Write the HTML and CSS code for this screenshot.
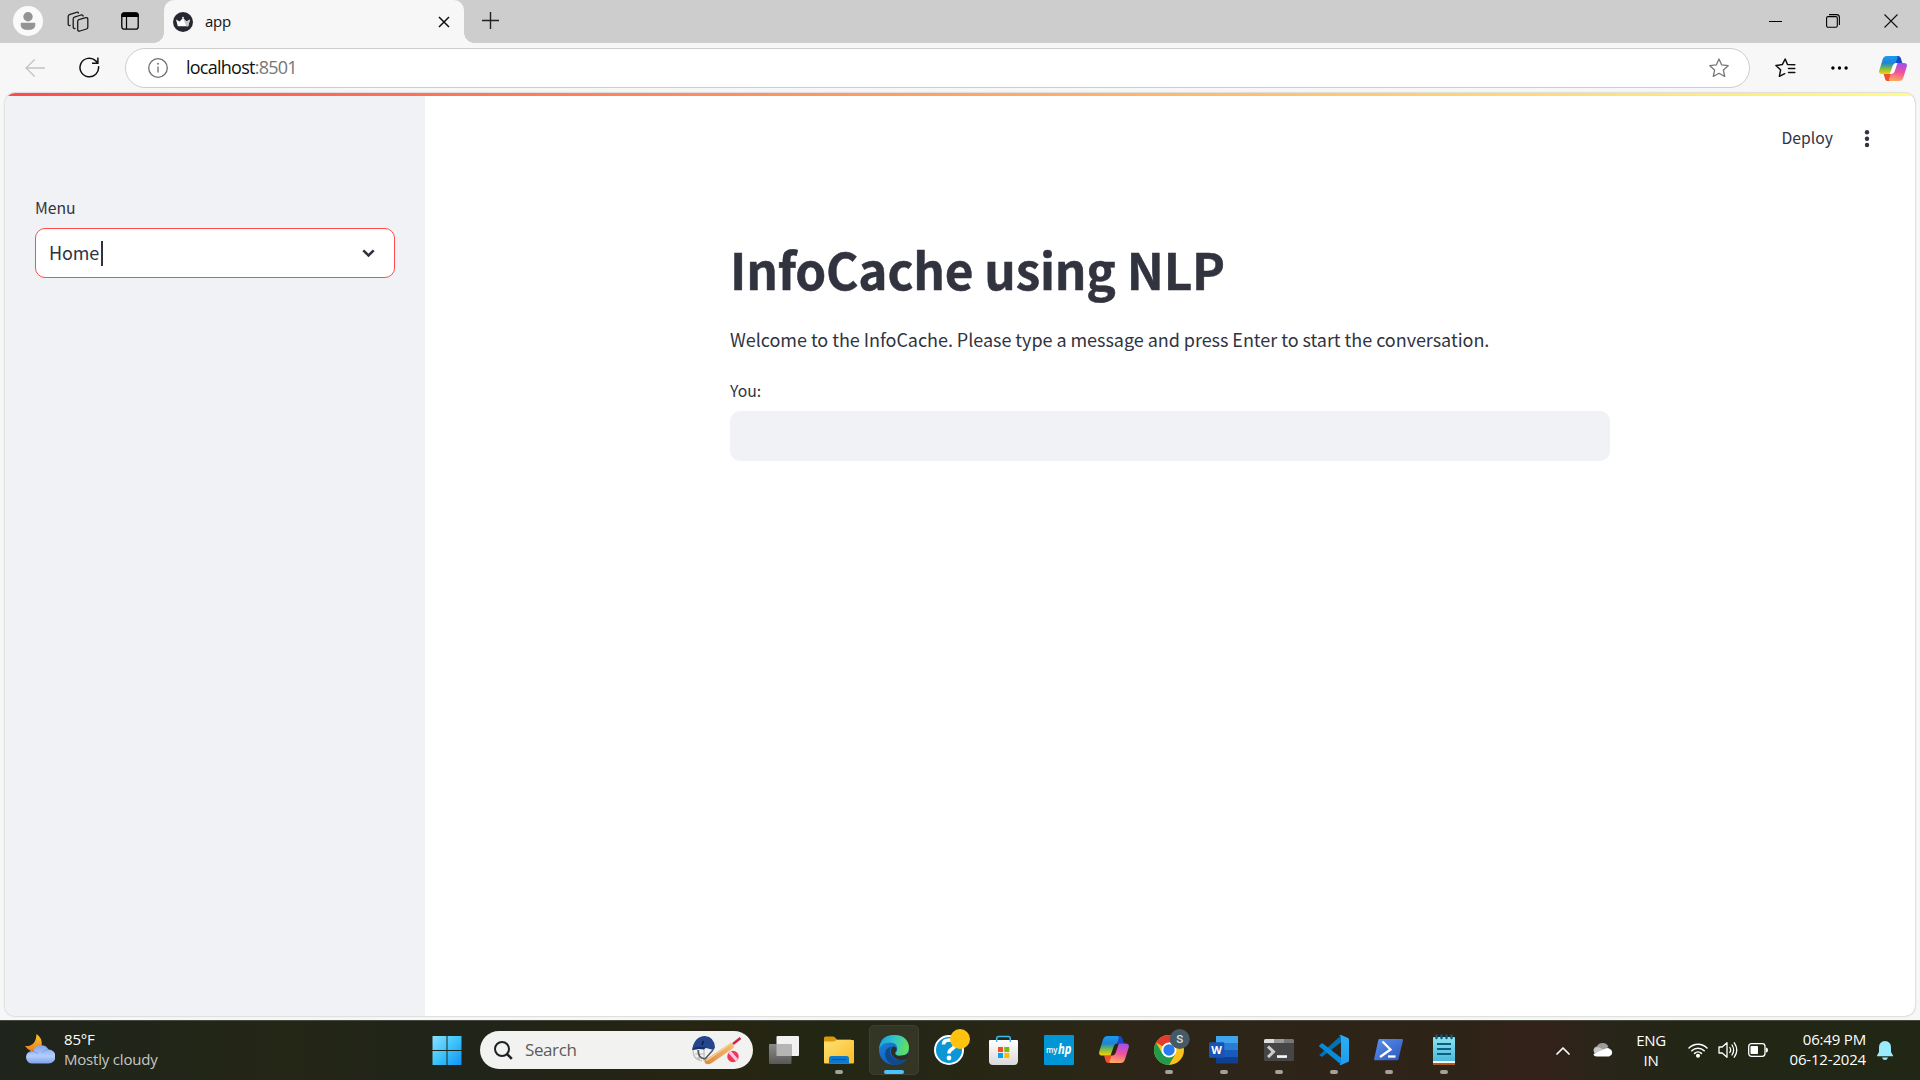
FILE: index.html
```html
<!DOCTYPE html>
<html lang="en">
<head>
<meta charset="utf-8">
<title>app</title>
<link rel="stylesheet" href="styles.css">
</head>
<body>
<svg class="defs" width="0" height="0" aria-hidden="true">
  <defs>
    <linearGradient id="cpA" x1="0" y1="0" x2="0" y2="1"><stop offset="0" stop-color="#1b9af0"/><stop offset=".4" stop-color="#1f83d6"/><stop offset=".65" stop-color="#6bb852"/><stop offset="1" stop-color="#ffd000"/></linearGradient>
    <linearGradient id="cpB" x1=".6" y1="0" x2=".4" y2="1"><stop offset="0" stop-color="#a24df0"/><stop offset=".5" stop-color="#f0529a"/><stop offset="1" stop-color="#ffa95c"/></linearGradient>
    <linearGradient id="win" gradientUnits="userSpaceOnUse" x1="10" y1="11" x2="40" y2="40"><stop offset="0" stop-color="#8be0ff"/><stop offset=".5" stop-color="#3cc3fb"/><stop offset="1" stop-color="#0f92f5"/></linearGradient>
    <linearGradient id="fold" x1="0" y1="0" x2="1" y2="1"><stop offset="0" stop-color="#ffdf75"/><stop offset="1" stop-color="#fabd25"/></linearGradient>
    <linearGradient id="edA" x1="0" y1=".3" x2="1" y2=".5"><stop offset="0" stop-color="#1b9de2"/><stop offset=".5" stop-color="#32c8c8"/><stop offset="1" stop-color="#65e055"/></linearGradient>
    <linearGradient id="edB" x1="0" y1="0" x2=".6" y2="1"><stop offset="0" stop-color="#1b8ad8"/><stop offset="1" stop-color="#1259b8"/></linearGradient>
    <linearGradient id="bag" x1="0" y1="0" x2="0" y2="1"><stop offset="0" stop-color="#fff"/><stop offset="1" stop-color="#d9d9d9"/></linearGradient>
    <linearGradient id="vs" x1="0" y1="0" x2="0" y2="1"><stop offset="0" stop-color="#2baef3"/><stop offset="1" stop-color="#1f9cec"/></linearGradient>
    <linearGradient id="ps" x1="0" y1="0" x2="1" y2="1"><stop offset="0" stop-color="#5a92f0"/><stop offset="1" stop-color="#2b55b8"/></linearGradient>
    <linearGradient id="note" x1="0" y1="0" x2="0" y2="1"><stop offset="0" stop-color="#8be4ee"/><stop offset="1" stop-color="#4cb9dd"/></linearGradient>
    <linearGradient id="moon" x1="0" y1="0" x2="0" y2="1"><stop offset="0" stop-color="#f9c832"/><stop offset="1" stop-color="#ee7d1a"/></linearGradient>
    <linearGradient id="cloud" x1="0" y1="0" x2="0" y2="1"><stop offset="0" stop-color="#7ea5ee"/><stop offset=".6" stop-color="#b4cdfa"/><stop offset="1" stop-color="#7ba0ee"/></linearGradient>
    <linearGradient id="bat" x1="1" y1="0" x2="0" y2="1"><stop offset="0" stop-color="#f7c27c"/><stop offset="1" stop-color="#d98a3c"/></linearGradient>
    <linearGradient id="tvF" x1="0" y1="0" x2="0" y2="1"><stop offset="0" stop-color="#8b8b8a"/><stop offset="1" stop-color="#585857"/></linearGradient>
    <symbol id="copilot" viewBox="0 0 30 27">
      <path d="M17 0h3.500q2 0 2.700 2l1.800 5.500h-5.500q-2 0-2.700 2z" fill="#1748c8"/>
      <path d="M12.500 27H9.300q-2 0-2.700-2L5 19.500h5.400q2.200 0 3-2.500z" fill="#f0512d"/>
      <path d="M8.500 0h9.700q2.200 0 1.500 2.300L15 16.500q-1 3-4.200 3H3.500Q-.7 19.500.3 15.500L4 3.500Q5.200 0 8.500 0z" fill="url(#cpA)"/>
      <path d="M21.500 27h-9.200q-2.300 0-1.500-2.400L15.500 10.500q1-3 4.200-3h6.800q4.200 0 3.200 4L26 23.500q-1.200 3.500-4.500 3.500z" fill="url(#cpB)"/>
      <path d="M14.800 10.200q.8-2.700 3.200-2.700h1.800l-3 9q-1 3-3.500 3h-1.800z" fill="var(--gap, #fff)"/>
    </symbol>
  </defs>
</svg>

<header class="tabstrip">
  <svg class="ic avatar" width="30" height="30" viewBox="0 0 30 30"><circle cx="15" cy="15" r="15" fill="#fafafa"/><circle cx="15" cy="10.700" r="4.700" fill="#949494"/><path d="M8 17h14v2.200q0 4.500-7 4.500t-7-4.500z" fill="#949494" stroke="#949494" stroke-width=".5" stroke-linejoin="round"/></svg>
  <svg class="ic spaces" width="22" height="22" viewBox="0 0 22 22" fill="none" stroke="#1c1c1c" stroke-width="1.300" stroke-linejoin="round" stroke-linecap="round"><path d="M11.800 8.600l7-1.900q2-.4 2 1.500v8q0 1.400-1.300 1.800l-6.600 2q-2.200.5-2.200-1.500v-8q0-1.500 1.100-1.900z"/><path d="M8 17.500q-1.800.4-1.800-1.500V8q0-1.500 1.200-1.900L14 4q1.800-.4 2.100 1"/><path d="M3 14.500q-1.800.3-1.800-1.500V5.500Q1.200 4 2.400 3.600L9.500 1.300q1.500-.4 2 .8"/></svg>
  <svg class="ic panes" width="18" height="18" viewBox="0 0 18 18"><rect x=".8" y=".8" width="16.400" height="16.400" rx="2.500" fill="none" stroke="#000" stroke-width="1.300"/><path d="M.5 5V2.500Q.5.500 2.500.5h13q2 0 2 2V5z"/><path d="M5.500 5v12" stroke="#000" stroke-width="1.200"/></svg>
  <div class="tab">
    <svg class="ic" width="20" height="20" viewBox="0 0 20 20"><circle cx="10" cy="10" r="10" fill="#262730"/><path d="M3 7.500l3.500 2L10 6l3.500 3.500 3.500-2-1.800 6.800H4.800z" fill="#fff"/><path d="M10 6l3.500 3.500 3.500-2-1.800 6.800h-2z" fill="#c9c9cc"/><circle cx="10" cy="5.700" r="1" fill="#ddd"/></svg>
    <span class="tab-title">app</span>
    <svg class="ic" width="12" height="12" viewBox="0 0 12 12"><path d="M1 1l10 10M11 1L1 11" stroke="#111" stroke-width="1.500"/></svg>
  </div>
  <svg class="ic plus" width="17" height="17" viewBox="0 0 17 17"><path d="M8.500 0v17M0 8.500h17" stroke="#222" stroke-width="1.400"/></svg>
  <div class="winbtns">
    <svg width="13" height="14" viewBox="0 0 13 14"><path d="M0 7.500h13" stroke="#000"/></svg>
    <svg width="14" height="14" viewBox="0 0 14 14" fill="none" stroke="#000" stroke-width="1.100"><rect x=".6" y="2.600" width="10.700" height="10.700" rx="1.500"/><path d="M3 .6h7.500q2.900 0 2.900 2.900V11"/></svg>
    <svg width="14" height="14" viewBox="0 0 14 14"><path d="M.5.500l13 13M13.500.5l-13 13" stroke="#111" stroke-width="1.100"/></svg>
  </div>
</header>

<nav class="toolbar">
  <svg class="ic back" width="20" height="18" viewBox="0 0 20 18" fill="none" stroke="#c4c4c4" stroke-width="1.300"><path d="M20 9H1M9.700.5L1 9l8.700 8.500"/></svg>
  <svg class="ic reload" width="21" height="21" viewBox="0 0 21 21" fill="none" stroke="#111" stroke-width="1.500"><path d="M19.500 9.200a9.300 9.300 0 1 1-2.700-5.300L18.800 6M18.900 0.500V6.300H13"/></svg>
  <div class="address">
    <svg class="ic" width="20" height="20" viewBox="0 0 20 20"><circle cx="10" cy="10" r="9.300" fill="none" stroke="#707070" stroke-width="1.300"/><path d="M10 8.500v6" stroke="#707070" stroke-width="1.300"/><circle cx="10" cy="5.800" r=".95" fill="#707070"/></svg>
    <span class="url">localhost<span class="port">:8501</span></span>
    <svg class="ic" width="20" height="20" viewBox="0 0 20 20" fill="none" stroke="#777" stroke-width="1.300" stroke-linejoin="round"><path d="M10 1l2.700 5.900 6.500.8-4.800 4.400 1.300 6.400L10 15.300l-5.700 3.200 1.300-6.400L.8 7.700l6.500-.8z"/></svg>
  </div>
  <svg class="ic favs" width="21" height="20" viewBox="0 0 21 20" fill="none" stroke="#111" stroke-width="1.500" stroke-linejoin="round" stroke-linecap="round"><path d="M12.500 6.500L10.200 1 7.300 6.600.9 7.500l4.700 4.300-1.200 6.500 5.300-2.600M12.500 6.500l7.300.3M13.500 10.500h6.300M13.500 14.500h6.300"/></svg>
  <svg class="ic more" width="17" height="4" viewBox="0 0 17 4"><circle cx="1.900" cy="2" r="1.700"/><circle cx="8.500" cy="2" r="1.700"/><circle cx="15.100" cy="2" r="1.700"/></svg>
  <svg class="ic cop" width="28" height="27"><use href="#copilot"/></svg>
</nav>

<div class="viewport">
  <div class="page">
    <div class="decoration"></div>
    <div class="columns">
      <aside class="sidebar">
        <label class="label">Menu</label>
        <div class="select"><span class="value">Home</span><i class="caret"></i>
          <svg class="ic" width="13" height="9" viewBox="0 0 13 9"><path d="M1.300 1.300l5.200 5.200 5.200-5.200" fill="none" stroke="#31333f" stroke-width="2.500"/></svg>
        </div>
      </aside>
      <main class="main">
        <div class="actions"><span class="deploy">Deploy</span>
          <svg class="ic" width="6" height="18" viewBox="0 0 6 18" fill="#31333f"><circle cx="3" cy="2.300" r="2.200"/><circle cx="3" cy="8.700" r="2.200"/><circle cx="3" cy="15" r="2.200"/></svg>
        </div>
        <div class="block">
          <h1>InfoCache using NLP</h1>
          <p>Welcome to the InfoCache. Please type a message and press Enter to start the conversation.</p>
          <label class="label you">You:</label>
          <div class="input"></div>
        </div>
      </main>
    </div>
  </div>
</div>

<footer class="taskbar">
  <div class="weather">
    <svg class="ic" width="30" height="30" viewBox="0 0 30 30"><path d="M11.500 0q6 4 5.200 11Q13 17 6 17 2 15 0 12q11 1 11.500-12z" fill="url(#moon)"/><path d="M6.500 29.500a6.300 6.300 0 0 1 0-12.500q1.500 0 1.800.3A8.300 8.300 0 0 1 23.500 15.500a7 7 0 0 1 0 14z" fill="url(#cloud)"/><path d="M4 18.500q5-2.500 9 1M17 19q2-3.500 6.500-3.500" stroke="#6f98e8" stroke-width=".8" fill="none"/></svg>
    <div class="two"><span>85°F</span><span class="dim">Mostly cloudy</span></div>
  </div>
  <svg class="tile start" viewBox="0 0 50 50"><path d="M10.500 11h14v14h-14zM25.500 11h14v14h-14zM10.500 26h14v14h-14zM25.500 26h14v14h-14z" fill="url(#win)"/></svg>
  <div class="search">
    <svg class="ic" width="19" height="19" viewBox="0 0 19 19" fill="none" stroke="#1e2124" stroke-width="2"><circle cx="8" cy="8" r="7"/><path d="M12.800 12.800l5 5" stroke-width="2.600"/></svg>
    <span class="search-text">Search</span>
    <svg class="ic" width="50" height="30" viewBox="0 0 50 30">
      <path d="M2 15q0 10 9 11M4 19h10M5 23h12M8 15v10M13 14v12" fill="none" stroke="#bbb" stroke-width="1.200"/>
      <path d="M7 15q0 8 7 9l8-9" fill="none" stroke="#555" stroke-width="1.500"/>
      <path d="M1 15Q3.500 1 14 1q9.500 1 10 11.500l-1.500 2.500L15 13z" fill="#27458c"/><path d="M1 15Q4 10 15 12.500l-2 2Q6 13.500 1 15z" fill="#16316f"/><path d="M12.500 6l-1.500 4" stroke="#101d42" stroke-width="1.500"/>
      <path d="M42 9l7.500-6" stroke="#cf2547" stroke-width="2.600"/>
      <path d="M13.500 25.500L40 7.500l3 2.500-.5 3L20 28.500q-4 1.500-5.500 0-1.500-1.500-1-3z" fill="url(#bat)"/><path d="M15.500 25.500L40 8.500" stroke="#fbd29b" stroke-width="1.300"/>
      <circle cx="42" cy="21.500" r="5.700" fill="#ed3852"/><path d="M37.500 18l7.500 8.500 2-2.500-7-8z" fill="#f5c8ea"/>
    </svg>
  </div>
  <div class="apps">
    <svg class="tile" viewBox="0 0 50 50"><rect x="17.500" y="11" width="22.500" height="20" rx="1" fill="#f1f1f1"/><rect x="10" y="19" width="22.500" height="20" rx="1" fill="url(#tvF)"/><path d="M17.500 19h15v12h-15z" fill="#b5b5b5"/></svg>
    <svg class="tile" viewBox="0 0 50 50"><path d="M10 13q0-1.500 1.500-1.500H19q1 0 2 1l2 2h14v6H10z" fill="#dc9a0b"/><path d="M10 16.500h10l2.500-1.500H39q1 0 1 1v21.500q0 1-1 1H11q-1 0-1-1z" fill="url(#fold)"/><path d="M15 38.500v-5q0-2.500 2.500-2.500h15q2.500 0 2.500 2.500v5z" fill="#0d79cf"/><path d="M18 34.500h14" stroke="#0a559c" stroke-width="1.200"/><rect class="dot" x="21" y="45" width="8" height="4" rx="2"/></svg>
    <svg class="tile active" viewBox="0 0 50 50"><circle cx="25" cy="25" r="15" fill="url(#edB)"/><path d="M10.200 24Q11 10 25 10q14 0 15 12.500 0 8-8.500 8-5.500 0-5-2.800 1.800-1.500 1.800-4Q28 17.500 21 17.500q-8 0-10.800 6.500z" fill="url(#edA)"/><path d="M23 21.500q-3 3-1.500 7.500 2.500 6 9.500 6 4.500 0 7.300-1.800.4 1.200-3.300 4-5 4-11 2.200-8-3-8-10.500 0-5.900 7-7.400z" fill="#114a8b"/><path d="M24 21.500q4 0 3.500 3.500-.5 1.800-1.500 2.500-.5 4.500 8 3 4.500-1 5.500-3.500 0 4-1.500 6.500-5 3-10.500.5-6.500-3.500-5.500-9 .5-2.500 2-3.500z" fill="#2c3024"/><rect x="15" y="45" width="20" height="4" rx="2" fill="#4cc2ff"/></svg>
    <svg class="tile" viewBox="0 0 50 50"><circle cx="25" cy="25" r="14" fill="#0b96d6" stroke="#fff" stroke-width="2"/><path d="M19.500 19.500q0-4.500 5.500-4.500 5.800 0 5.800 4.500 0 3-3.300 4.800-2.500 1.500-2.500 4.200" fill="none" stroke="#fff" stroke-width="3.600"/><circle cx="25" cy="33" r="2.400" fill="#fff"/><circle cx="36" cy="14" r="10" fill="#ffc20e"/></svg>
    <svg class="tile" viewBox="0 0 50 50"><path d="M10 16q0-1 1-1h27q1 0 1 1v20q0 4-4 4H14q-4 0-4-4z" fill="url(#bag)"/><path d="M17.700 17v-3.500q0-2 2-2h9.600q2 0 2 2V17" fill="none" stroke="#35bdf0" stroke-width="1.500"/><path d="M19 22h5v5h-5z" fill="#f25022"/><path d="M25.300 22h5v5h-5z" fill="#7fba00"/><path d="M19 28h5v5h-5z" fill="#00a4ef"/><path d="M25.300 28h5v5h-5z" fill="#ffb900"/></svg>
    <svg class="tile" viewBox="0 0 50 50"><rect x="10" y="10" width="30" height="30" rx="1" fill="#0096d6"/><text class="hp" x="12" y="28" textLength="11.500" lengthAdjust="spacingAndGlyphs" font-size="8.500">my</text><text class="hp it" x="24" y="29" textLength="13.500" lengthAdjust="spacingAndGlyphs" font-size="14">hp</text></svg>
    <svg class="tile dark" viewBox="0 0 50 50"><use href="#copilot" x="10" y="11" width="30" height="27"/></svg>
    <svg class="tile" viewBox="0 0 50 50"><circle cx="25" cy="25" r="15" fill="#fbc116"/><path d="M25 25L12 17.500A15 15 0 0 1 38 17.500H25z" fill="#e33b2e"/><path d="M12 17.500A15 15 0 0 0 25 40l6.500-11.200L25 25 18.500 28.700z" fill="#229a4b"/><circle cx="25" cy="25" r="7.500" fill="#fff"/><circle cx="25" cy="25" r="5.700" fill="#2a7bee"/><circle cx="35.700" cy="14" r="10" fill="#455a64"/><text class="badge" x="35.700" y="18" font-size="11.500">S</text><rect class="dot" x="21" y="45" width="8" height="4" rx="2"/></svg>
    <svg class="tile" viewBox="0 0 50 50"><path d="M17 11h22v7H17z" fill="#41a5ee"/><path d="M17 18h22v7H17z" fill="#2b7cd3"/><path d="M17 25h22v7H17z" fill="#185abd"/><path d="M17 32h22v6.500H17z" fill="#103f91"/><rect x="10" y="17.300" width="15.300" height="15.400" rx="1.300" fill="#1853b5"/><text class="word" x="17.600" y="28.800" font-size="11">W</text><rect class="dot" x="21" y="45" width="8" height="4" rx="2"/></svg>
    <svg class="tile" viewBox="0 0 50 50"><rect x="10" y="14" width="30" height="22" rx="1.500" fill="#464646"/><path d="M10 18v-2.500q0-1.500 1.500-1.500H20v4z" fill="#ddd"/><path d="M20 14h10v4H20z" fill="#9b9b9b"/><path d="M30 14h8.500q1.500 0 1.500 1.500V18H30z" fill="#777"/><path d="M14 21.500l5.500 5.300-5.500 5.300" fill="none" stroke="#ccc" stroke-width="3"/><path d="M23 30.200h10v2.700H23z" fill="#f5f5f5"/><rect class="dot" x="21" y="45" width="8" height="4" rx="2"/></svg>
    <svg class="tile" viewBox="0 0 50 50"><path d="M10 29.500l2 2q.8.500 1.500 0L32.500 17v-7l-21 19q-.8.500-1.500.5z" fill="#0072b9"/><path d="M10.300 20.500l2-2q.8-.5 1.500 0L32.500 33v7L10.300 21.500q-.5-.5 0-1z" fill="#0a8bd8"/><path d="M32 10l7 3q1 .5 1 1.500v21q0 1-1 1.500l-7 3q-1 .2-2-1 2 1 2-1.500v-25q0-2.500-2-1.500 1-1.200 2-1z" fill="url(#vs)"/><rect class="dot" x="21" y="45" width="8" height="4" rx="2"/></svg>
    <svg class="tile" viewBox="0 0 50 50"><path d="M15.500 14H38q1.300 0 1 1.300L34.500 34q-.3 1.300-1.500 1.300H11q-1.200 0-.9-1.300l4.200-18.700q.3-1.300 1.200-1.300z" fill="url(#ps)"/><path d="M18.500 16.500l8 8-10.500 7.500" fill="none" stroke="#fff" stroke-width="2.300"/><path d="M24 31.500h7.500" stroke="#fff" stroke-width="2.300"/><rect class="dot" x="21" y="45" width="8" height="4" rx="2"/></svg>
    <svg class="tile" viewBox="0 0 50 50"><path d="M14 36h22v4H14z" fill="#b2581c"/><path d="M14 34h22v4H14z" fill="#f3f3f3"/><path d="M14 13q0-1 1-1h20q1 0 1 1v23H14z" fill="url(#note)"/><path d="M18 19h14M18 24h14M18 29h14" stroke="#0c5f82" stroke-width="1.800"/><path d="M17.500 10.500v2.500M22.500 10.500v2.500M27.500 10.500v2.500M32.500 10.500v2.500" stroke="#0e5a78" stroke-width="2.400" stroke-linecap="round"/><rect class="dot" x="21" y="45" width="8" height="4" rx="2"/></svg>
  </div>
  <div class="tray">
    <svg class="ic up" width="14" height="9" viewBox="0 0 14 9"><path d="M1 8l6-6 6 6" fill="none" stroke="#fff" stroke-width="1.700" stroke-linecap="round" stroke-linejoin="round"/></svg>
    <svg class="ic onedrive" width="20" height="14" viewBox="0 0 20 14"><path d="M3.500 11a4 4 0 0 1 .5-7.800A6.500 6.500 0 0 1 15.500 4z" fill="#9c9c9b"/><path d="M2 4.800q3-1.500 6 .5l8 5H2a4 4 0 0 1 0-5.500z" fill="#c9c9c8"/><path d="M3.800 13.500q-3 0-3.300-2.500L12 5.700q2.500-1.500 5 .3a4 4 0 0 1-1 7.500z" fill="#fff"/></svg>
    <div class="two lang"><span>ENG</span><span>IN</span></div>
    <svg class="ic wifi" width="20" height="16" viewBox="0 0 20 16" fill="none" stroke="#fff" stroke-width="1.500" stroke-linecap="round"><path d="M1 6a12.700 12.700 0 0 1 18 0M3.800 8.800a8.800 8.800 0 0 1 12.400 0M6.600 11.400a4.900 4.900 0 0 1 6.800 0"/><circle cx="10" cy="13.800" r="1.300" fill="#fff"/></svg>
    <svg class="ic vol" width="20" height="18" viewBox="0 0 20 18" fill="none" stroke="#fff" stroke-width="1.300" stroke-linecap="round" stroke-linejoin="round"><path d="M1 6h3.200l4.800-4.300v14.600L4.200 12H1z"/><path d="M11.800 6.500q1.700 2.500 0 5M14 4q3.300 5 0 10M16.300 1.800q5 7.200 0 14.400"/></svg>
    <svg class="ic batt" width="20" height="14" viewBox="0 0 20 14"><rect x=".7" y=".7" width="16.300" height="12.600" rx="2.700" fill="none" stroke="#fff" stroke-width="1.300"/><rect x="2.500" y="3" width="7.500" height="8" rx=".7" fill="#fff"/><path d="M18 4.500q2 0 2 2.500t-2 2.500z" fill="#fff"/></svg>
    <div class="two clock"><span>06:49 PM</span><span>06-12-2024</span></div>
    <svg class="ic bell" width="16" height="19" viewBox="0 0 16 19" fill="#99ebff"><path d="M8 0q6 .5 6 6.500V11l2 3.500v.8H0v-.8L2 11V6.500Q2 .5 8 0zM5 16.500h6q-.8 2.500-3 2.500t-3-2.500z"/></svg>
  </div>
</footer>
</body>
</html>
```
FILE: styles.css
```css
* { box-sizing: border-box; }
body {
  margin: 0; width: 1920px; height: 1080px; overflow: hidden;
  display: flex; flex-direction: column;
  background: #f7f7f7;
  font-family: "Open Sans", "Noto Sans", sans-serif;
}
.defs { position: absolute; }
.ic { flex: none; display: block; }
span { white-space: nowrap; }

/* Tab strip */
.tabstrip { height: 43px; flex: none; display: flex; align-items: flex-start; background: #cdcdcd; }
.avatar { margin: 6px 0 0 13px; }
.spaces { margin: 10.500px 0 0 24px; }
.panes { margin: 12px 0 0 32px; }
.tab {
  position: relative; width: 300px; height: 43px; margin-left: 25px; padding: 1px 14px 0 9px;
  display: flex; align-items: center; background: #f7f7f7; border-radius: 10px 10px 0 0;
}
.tab::before, .tab::after { content: ""; position: absolute; bottom: 0; width: 10px; height: 10px; }
.tab::before { left: -10px; background: radial-gradient(circle at 0 0, #cdcdcd 9.500px, #f7f7f7 10px); }
.tab::after { right: -10px; background: radial-gradient(circle at 100% 0, #cdcdcd 9.500px, #f7f7f7 10px); }
.tab-title { flex: 1; margin-left: 12px; font-size: 15px; line-height: 20px; letter-spacing: -.3px; color: #111; padding-bottom: 3px; }
.plus { margin: 12px 0 0 18px; }
.winbtns { margin: 14px 22px 0 auto; display: flex; gap: 44px; }

/* Toolbar */
.toolbar { height: 50px; flex: none; display: flex; align-items: center; }
.back { margin-left: 25px; }
.reload { margin-left: 34px; margin-top: -1px; }
.address {
  width: 1625px; height: 40px; margin-left: 25px; padding: 0 20px 0 22px;
  display: flex; align-items: center; background: #fff; border: 1px solid #cdcdcd; border-radius: 20px;
}
.url { flex: 1; margin-left: 18px; font-size: 18px; line-height: 24px; letter-spacing: -.75px; color: #111; padding-bottom: 3px; }
.port { color: #767676; }
.favs { margin-left: 25px; }
.more { margin-left: 35px; }
.cop { margin-left: 31px; }

/* Page frame */
.viewport { height: 927px; flex: none; padding: 0 5px 4px; }
.page {
  height: 923px; display: flex; flex-direction: column; overflow: hidden;
  background: #fff; border-radius: 10px; box-shadow: 0 0 2px rgba(0, 0, 0, .35);
  color: #31333f; font-family: "Noto Sans CJK JP", "Noto Sans CJK SC", sans-serif;
}
.decoration { height: 3px; flex: none; background: linear-gradient(90deg, #ff4b4b, #fffd80); }
.columns { flex: 1; display: flex; }
.sidebar { width: 420px; padding: 100px 30px 0; background: #f0f2f6; }
.label { display: block; font-size: 15.750px; line-height: 24px; }
.select {
  height: 50px; margin-top: 8px; padding: 0 19px 0 13px; display: flex; align-items: center;
  background: #fff; border: 1px solid #ff4b4b; border-radius: 10px;
}
.value { font-size: 18px; line-height: 26px; letter-spacing: -.15px; padding-bottom: 2px; }
.caret { width: 2px; height: 25px; margin: 0 auto 0 2px; background: #31333f; }
.main { flex: 1; display: flex; flex-direction: column; align-items: center; }
.actions { align-self: stretch; height: 83px; padding: 2px 45px 0 0; display: flex; justify-content: flex-end; align-items: center; gap: 31px; }
.deploy { font-size: 15.750px; line-height: 24px; padding-bottom: 2px; }
.block { width: 880px; padding-top: 57px; }
h1 { margin: 0; font-size: 49.500px; line-height: 66px; font-weight: 700; letter-spacing: -.2px; white-space: nowrap; -webkit-text-stroke: .5px #31333f; }
p { margin: 22px 0 0; font-size: 18px; line-height: 30px; letter-spacing: -.042px; white-space: nowrap; }
.you { margin-top: 25px; }
.input { height: 50px; margin-top: 8px; background: #f0f2f6; border-radius: 10px; }

/* Taskbar */
.taskbar {
  height: 60px; flex: none; display: flex; align-items: center; color: #fff;
  background: linear-gradient(90deg, #1f241c 0, #242716 15%, #20241a 23%, #272512 37%, #222714 43%, #2c2617 58%, #2e2317 76%, #34221a 80%, #282519 84%, #222615 88%, #222614 100%);
  border-top: 1px solid #474a40;
}
.weather { width: 422px; padding-left: 25px; display: flex; align-items: center; gap: 9px; }
.weather .ic { margin-top: -3px; }
.two { display: flex; flex-direction: column; font-size: 15px; line-height: 20px; padding-bottom: 4px; }
.dim { color: #c6c7c2; }
.weather .two { letter-spacing: -.2px; }
.tile { width: 50px; height: 50px; flex: none; display: block; margin-top: -1px; }
.search { width: 273px; height: 38px; margin: -1px 0 0 8px; padding: 0 12px 0 14px; display: flex; align-items: center; background: #f2f3f0; border-radius: 19px; }
.search-text { flex: 1; margin-left: 12px; font-size: 17px; line-height: 24px; letter-spacing: -.4px; color: #5c5c5c; }
.apps { margin-left: 6px; display: flex; gap: 5px; }
.active { background: rgba(255, 255, 255, .07); border-radius: 5px; outline: 1px solid rgba(255, 255, 255, .05); outline-offset: -1px; }
.dot { fill: #a3a19b; }
.dark { --gap: #2a2618; }
.hp { fill: #fff; font-family: "Open Sans", sans-serif; font-weight: 600; }
.it { font-style: italic; font-weight: 700; }
.badge { fill: #dfe3e5; font-family: Roboto, sans-serif; font-weight: 500; text-anchor: middle; }
.word { fill: #fff; font-family: "Open Sans", sans-serif; font-weight: 700; text-anchor: middle; }
.tray { margin-left: auto; padding-right: 27px; display: flex; align-items: center; }
.tray .ic { margin-top: -1px; }
.onedrive { margin-left: 23px; }
.lang { width: 40px; margin-left: 18px; align-items: center; letter-spacing: -.3px; padding-bottom: 2px; }
.wifi { margin-left: 17px; }
.vol { margin-left: 10px; }
.batt { margin-left: 10px; }
.clock { width: 91px; margin-left: 7px; align-items: flex-end; letter-spacing: -.18px; }
.bell { margin-left: 11px; }
```
